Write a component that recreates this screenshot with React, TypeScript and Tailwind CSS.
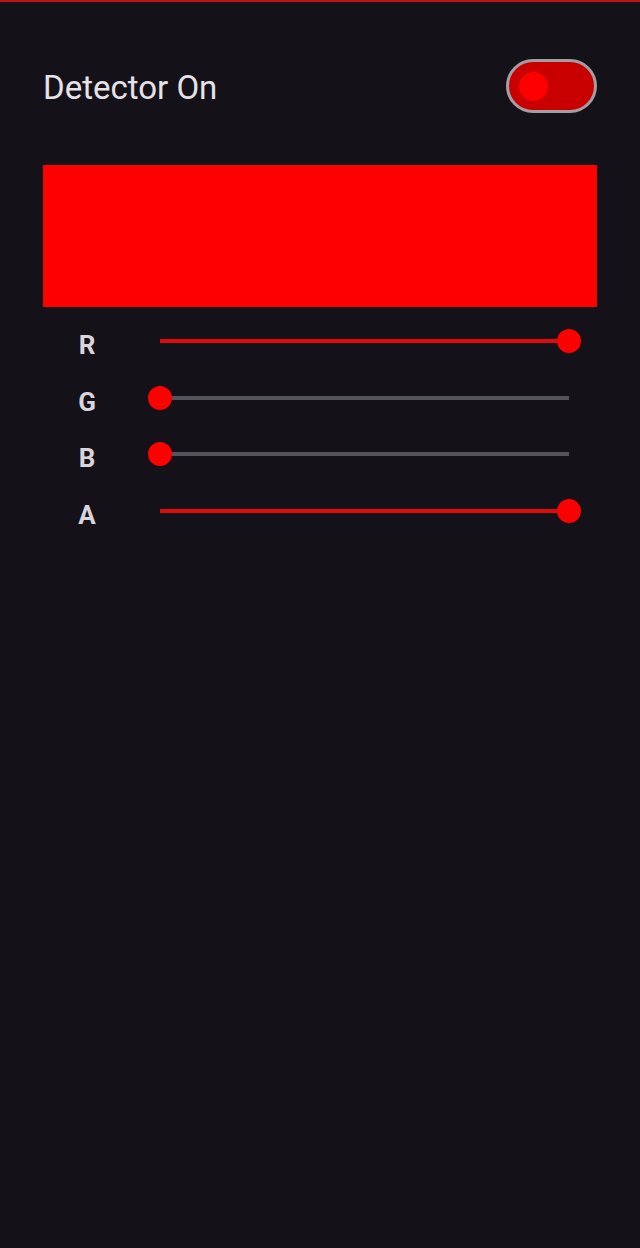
import React from 'react';

const channels = [
  { label: 'R', value: 255 },
  { label: 'G', value: 0 },
  { label: 'B', value: 0 },
  { label: 'A', value: 255 },
];

function Slider({ value }: { value: number }) {
  const pct = (value / 255) * 100;
  return (
    <div className="relative h-full flex-1 px-3">
      <div className="relative h-full">
        <div className="absolute left-0 right-0 top-1/2 h-[4px] -translate-y-1/2 bg-[#55535a]" />
        <div
          className="absolute left-0 top-1/2 h-[4px] -translate-y-1/2 bg-[#e00a0a]"
          style={{ width: `${pct}%` }}
        />
        <div
          className="absolute top-1/2 h-6 w-6 -translate-x-1/2 -translate-y-1/2 rounded-full bg-[#ff0000]"
          style={{ left: `${pct}%` }}
        />
      </div>
    </div>
  );
}

export default function App() {
  return (
    <div className="min-h-[1248px] w-full bg-[#141218] font-['Roboto',sans-serif]">
      <div className="h-[2px] bg-[#c0101a]" />
      <div className="flex items-center justify-between pl-[43px] pr-[43px] pt-[57px]">
        <span className="pt-[4px] text-[33px] leading-[40px] text-[#e6e1e6]">Detector On</span>
        <div className="flex h-[54px] w-[91px] items-center rounded-full border-[3px] border-[#a29ea3] bg-[#c80000] pl-[10px]">
          <div className="h-[29px] w-[29px] rounded-full bg-[#ff0000]" />
        </div>
      </div>
      <div className="mx-[43px] mt-[52px] h-[142px] bg-[#ff0000]" />
      <div className="mt-[6px] flex flex-col">
        {channels.map((c) => (
          <div key={c.label} className="flex h-[56.5px] items-center pl-[43px] pr-[59px]">
            <span className="w-[88px] pt-[9px] text-center text-[26px] font-bold text-[#d9d4dc]">
              {c.label}
            </span>
            <div className="ml-[17px] h-full flex-1">
              <Slider value={c.value} />
            </div>
          </div>
        ))}
      </div>
    </div>
  );
}
